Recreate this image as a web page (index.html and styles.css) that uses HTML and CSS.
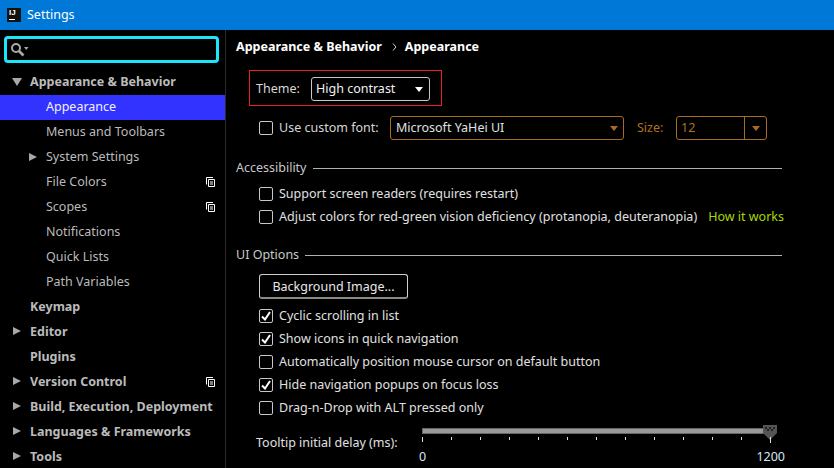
FILE: index.html
```html
<!DOCTYPE html>
<html lang="en">
<head>
<meta charset="utf-8">
<title>Settings</title>
<link rel="stylesheet" href="styles.css">
</head>
<body>
<header class="titlebar">
  <span class="logo"><span class="logo-text">IJ</span><span class="logo-bar"></span></span>
  <span class="title">Settings</span>
</header>
<div class="main">
  <aside class="sidebar">
    <div class="search">
      <svg width="18" height="17" viewBox="0 0 18 17"><circle cx="5" cy="7" r="4" fill="none" stroke="#a8a8a8" stroke-width="2"/><path d="M8 10l4.500 4.500" stroke="#a8a8a8" stroke-width="2.600"/><path d="M13 6h4.500l-2.250 3z" fill="#a8a8a8"/></svg>
    </div>
    <nav class="tree">
      <div class="row top"><span class="arrow down"></span>Appearance &amp; Behavior</div>
      <div class="row sub selected">Appearance</div>
      <div class="row sub">Menus and Toolbars</div>
      <div class="row sub"><span class="arrow right inner"></span>System Settings</div>
      <div class="row sub">File Colors<svg class="copy" width="9" height="10" viewBox="0 0 9 10"><path d="M.5 7.500V.5H7M2.500 2.500h6v7h-6zM4 5h3M4 7h3" fill="none" stroke="#fff"/></svg></div>
      <div class="row sub">Scopes<svg class="copy" width="9" height="10" viewBox="0 0 9 10"><path d="M.5 7.500V.5H7M2.500 2.500h6v7h-6zM4 5h3M4 7h3" fill="none" stroke="#fff"/></svg></div>
      <div class="row sub">Notifications</div>
      <div class="row sub">Quick Lists</div>
      <div class="row sub">Path Variables</div>
      <div class="row top">Keymap</div>
      <div class="row top"><span class="arrow right"></span>Editor</div>
      <div class="row top">Plugins</div>
      <div class="row top"><span class="arrow right"></span>Version Control<svg class="copy" width="9" height="10" viewBox="0 0 9 10"><path d="M.5 7.500V.5H7M2.500 2.500h6v7h-6zM4 5h3M4 7h3" fill="none" stroke="#fff"/></svg></div>
      <div class="row top"><span class="arrow right"></span>Build, Execution, Deployment</div>
      <div class="row top"><span class="arrow right"></span>Languages &amp; Frameworks</div>
      <div class="row top"><span class="arrow right"></span>Tools</div>
    </nav>
  </aside>
  <section class="content">
    <div class="crumbs"><b>Appearance &amp; Behavior</b><svg class="crumb-sep" width="5" height="8" viewBox="0 0 5 8"><path d="M1 .5L4 4 1 7.500" fill="none" stroke="#c8c8c8"/></svg><b>Appearance</b></div>
    <div class="theme-box">
      <span class="theme-label">Theme:</span>
      <div class="select theme-select"><span>High contrast</span><i class="caret white"></i></div>
    </div>
    <div class="font-row">
      <label class="check"><span class="box"></span>Use custom font:</label>
      <div class="select font-select"><span>Microsoft YaHei UI</span><i class="caret amber"></i></div>
      <span class="size-label">Size:</span>
      <div class="select size-select"><span class="size-value">12</span><span class="size-btn"><i class="caret amber"></i></span></div>
    </div>
    <div class="group-title access"><span>Accessibility</span><hr></div>
    <div class="checks access-checks">
      <label class="check"><span class="box"></span>Support screen readers (requires restart)</label>
      <label class="check"><span class="box"></span>Adjust colors for red-green vision deficiency (protanopia, deuteranopia)<a class="link">How it works</a></label>
    </div>
    <div class="group-title ui"><span>UI Options</span><hr></div>
    <button class="btn">Background Image...</button>
    <div class="checks ui-checks">
      <label class="check"><span class="box on"><svg width="10" height="10" viewBox="0 0 10 10"><path d="M1 5.500L4 8.500 9 1" fill="none" stroke="#fff" stroke-width="2"/></svg></span>Cyclic scrolling in list</label>
      <label class="check"><span class="box on"><svg width="10" height="10" viewBox="0 0 10 10"><path d="M1 5.500L4 8.500 9 1" fill="none" stroke="#fff" stroke-width="2"/></svg></span>Show icons in quick navigation</label>
      <label class="check"><span class="box"></span>Automatically position mouse cursor on default button</label>
      <label class="check"><span class="box on"><svg width="10" height="10" viewBox="0 0 10 10"><path d="M1 5.500L4 8.500 9 1" fill="none" stroke="#fff" stroke-width="2"/></svg></span>Hide navigation popups on focus loss</label>
      <label class="check"><span class="box"></span>Drag-n-Drop with ALT pressed only</label>
    </div>
    <div class="slider-row">
      <span class="slider-label">Tooltip initial delay (ms):</span>
      <div class="slider">
        <div class="track"><svg class="thumb" width="14" height="15" viewBox="0 0 14 15"><path d="M0 0h14v8l-7 7-7-7z" fill="#555"/><path d="M2 2h2v2H2zM6 2h2v2H6zM10 2h2v2h-2zM4 4h2v2H4zM8 4h2v2H8z" fill="#222"/></svg></div>
        <div class="ticks"></div>
        <div class="scale"><span>0</span><span>1200</span></div>
      </div>
    </div>
  </section>
</div>
</body>
</html>
```
FILE: styles.css
```css
* { box-sizing: border-box; }
html, body { margin: 0; height: 100%; overflow: hidden; }
body {
  width: 834px; height: 468px;
  background: #000; color: #d8d8d8;
  font: 12.5px/18px "Noto Sans", "Open Sans", sans-serif;
  display: flex; flex-direction: column;
}
.titlebar {
  height: 30px; flex: none; background: #0078d7;
  display: flex; align-items: center; gap: 6px; padding-left: 7px; color: #fff;
}
.logo { width: 14px; height: 14px; background: #111; position: relative; display: block; }
.logo-text { display: block; color: #fff; font: bold 8px/9px "Liberation Sans", sans-serif; padding-left: 2px; }
.logo-bar { position: absolute; left: 2px; bottom: 2px; width: 6px; height: 1px; background: #fff; }
.title { font-size: 12.5px; }
.main { flex: 1; display: flex; min-height: 0; }
.sidebar { width: 226px; flex: none; border-right: 1px solid #2b2b2b; padding-top: 6px; }
.search {
  width: 215px; height: 27px; margin-left: 4px;
  border: 3px solid #19e6fa; border-radius: 4px;
  padding-left: 4px; display: flex; align-items: center;
}
.tree { margin-top: 7px; }
.row { height: 25px; padding-bottom: 1px; display: flex; align-items: center; position: relative; color: #bbb; }
.row.top { padding-left: 30px; font-weight: 700; }
.row.sub { padding-left: 46px; }
.row.selected { background: #3333ff; color: #f0f0ff; }
.arrow { position: absolute; width: 0; height: 0; top: 7px; }
.arrow.right { left: 13px; border-left: 8px solid #a8a8a8; border-top: 4.5px solid transparent; border-bottom: 4.5px solid transparent; }
.arrow.right.inner { left: 29px; top: 8px; }
.arrow.down { left: 12px; top: 8px; border-top: 8px solid #a8a8a8; border-left: 5px solid transparent; border-right: 5px solid transparent; }
.copy { position: absolute; left: 206px; top: 7px; }
.content { flex: 1; min-width: 0; padding: 6px 52px 0 10px; }
.crumbs { height: 22px; display: flex; align-items: center; color: #fff; }
.crumbs b { font-weight: 700; }
.crumb-sep { margin: 0 8px 0 10px; }
.theme-box {
  width: 193px; height: 36px; margin: 12px 0 0 13px;
  border: 1px solid #e8212b;
  display: flex; align-items: center; padding: 2px 0 0 6px; color: #d8d8d8;
}
.theme-label { width: 55px; flex: none; }
.select {
  height: 24px; border: 1px solid #c8c8c8; border-radius: 3px;
  display: flex; align-items: center; position: relative;
}
.theme-select { width: 119px; padding-left: 4px; color: #f0f0f0; }
.caret { display: block; width: 0; height: 0; border-top: 5px solid; border-left: 4.5px solid transparent; border-right: 4.5px solid transparent; }
.caret.white { color: #fff; position: absolute; right: 6px; top: 9px; }
.caret.amber { color: #a86c1e; }
.font-row { display: flex; align-items: center; margin: 10px 0 0 23px; height: 24px; }
.font-row .check { width: 131px; flex: none; }
.check { display: flex; align-items: center; gap: 6px; white-space: nowrap; }
.box {
  width: 14px; height: 14px; flex: none; border: 1px solid #c8c8c8; border-radius: 2px;
  display: flex; align-items: center; justify-content: center;
}
.font-select { width: 234px; flex: none; border-color: #a86c1e; padding-left: 5px; color: #e0e0e0; }
.font-select .caret { position: absolute; right: 5px; top: 9px; }
.size-label { color: #b0701c; margin-left: 13px; width: 39px; flex: none; }
.size-select { width: 91px; flex: none; border-color: #a86c1e; color: #b0701c; padding-left: 4px; }
.size-btn { position: absolute; right: 0; top: 0; bottom: 0; width: 22px; border-left: 1px solid #a86c1e; display: flex; align-items: center; justify-content: center; }
.group-title { display: flex; align-items: center; gap: 6px; height: 18px; }
.group-title span { flex: none; color: #c8c8c8; }
.group-title hr { flex: 1; margin: 0; border: 0; height: 1px; background: #b0b0b0; }
.access { margin-top: 19px; }
.ui { margin-top: 18px; }
.checks { display: flex; flex-direction: column; margin-left: 23px; color: #e0e0e0; }
.check { height: 23px; }
.access-checks { margin-top: 5px; }
.link { color: #a8d800; margin-left: 5px; }
.btn {
  display: block; width: 149px; height: 25px; margin: 10px 0 0 23px;
  background: #000; color: #e8e8e8; font: inherit; padding: 2px 0 0;
  border: 1px solid #d0d0d0; border-bottom: 2px solid #8a8a80; border-radius: 3px;
}
.ui-checks { margin-top: 5px; }
.slider-row { display: flex; margin: 14px 0 0 20px; position: relative; }
.slider-label { width: 166px; flex: none; line-height: 18px; margin-top: 1px; color: #e0e0e0; }
.slider { width: 349px; flex: none; margin-top: -5px; }
.track { height: 6px; border: 1px solid #666; background: #999; position: relative; }
.thumb { position: absolute; right: -7px; top: -4px; }
.ticks {
  height: 5px; margin-top: 3px; width: 349px;
  background: repeating-linear-gradient(90deg, #e0e0e0 0 1px, transparent 1px 29px) 0 0 / 100% 3px no-repeat,
    linear-gradient(90deg, #e0e0e0 0 1px, transparent 1px) 0 0 / 100% 100% no-repeat;
  position: relative;
}
.ticks::after { content: ""; position: absolute; right: 0; top: 0; width: 1px; height: 6px; background: #e0e0e0; }
.scale { display: flex; justify-content: space-between; margin: 6px -14px 0 -3px; color: #d8e8f8; }
```
